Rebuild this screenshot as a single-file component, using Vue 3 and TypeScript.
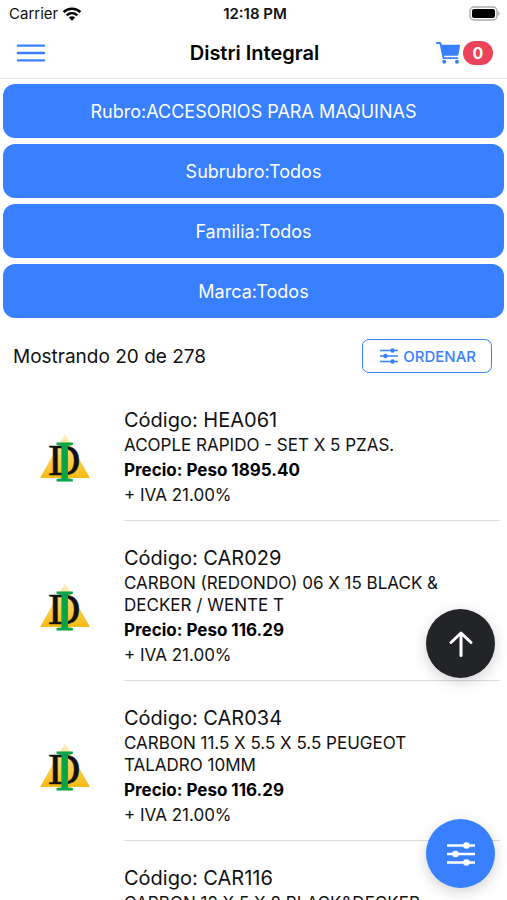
<script setup lang="ts">
import { ref } from 'vue'

interface Product {
  code: string
  description: string
  price: string
}

const filters = [
  { label: 'Rubro', value: 'ACCESORIOS PARA MAQUINAS' },
  { label: 'Subrubro', value: 'Todos' },
  { label: 'Familia', value: 'Todos' },
  { label: 'Marca', value: 'Todos' },
]

const products: Product[] = [
  { code: 'HEA061', description: 'ACOPLE RAPIDO - SET X 5 PZAS.', price: '1895.40' },
  { code: 'CAR029', description: 'CARBON (REDONDO) 06 X 15 BLACK & DECKER / WENTE T', price: '116.29' },
  { code: 'CAR034', description: 'CARBON 11.5 X 5.5 X 5.5 PEUGEOT TALADRO 10MM', price: '116.29' },
  { code: 'CAR116', description: 'CARBON 12 X 5 X 8 BLACK&DECKER TALADRO', price: '116.29' },
]

const cartCount = ref(0)
const list = ref<HTMLElement | null>(null)

function scrollToTop() {
  list.value?.scrollTo({ top: 0, behavior: 'smooth' })
}
</script>

<template>
  <div class="screen">
    <div class="status">
      <div class="carrier">
        <span>Carrier</span>
        <svg width="20" height="14" viewBox="0 0 20 14" aria-hidden="true">
          <g fill="none" stroke="#000" stroke-width="2.4">
            <path d="M1.6 5.2a12 12 0 0 1 16.8 0" />
            <path d="M4.7 8.3a7.6 7.6 0 0 1 10.6 0" />
          </g>
          <path d="M10 13.8 6.8 10.6a4.6 4.6 0 0 1 6.4 0z" />
        </svg>
      </div>
      <span class="clock">12:18 PM</span>
      <svg class="battery" width="32" height="15" viewBox="0 0 32 15" aria-hidden="true">
        <rect x="1" y="1" width="27" height="13" rx="4" fill="#fff" stroke="#aaa" stroke-width="1.4" />
        <rect x="3" y="3" width="23" height="9" rx="2" />
        <path d="M29.3 5.2c1.6.6 1.6 4 0 4.6z" fill="#999" />
      </svg>
    </div>

    <header class="toolbar">
      <button class="icon-button" type="button" aria-label="Menú">
        <svg width="30" height="20" viewBox="0 0 30 20">
          <path d="M2 2.600h26M2 10h26M2 17.400h26" stroke="#3880ff" stroke-width="2.400" stroke-linecap="round" />
        </svg>
      </button>
      <h1>Distri Integral</h1>
      <button class="icon-button cart" type="button" aria-label="Carrito">
        <svg width="26" height="24" viewBox="0 0 26 24">
          <path d="M1.900 2h3.400l3.300 15.200h13.900" fill="none" stroke="#3880ff" stroke-width="1.800" stroke-linecap="round" stroke-linejoin="round" />
          <path d="M5.500 3.700h18.800q.9 0 .7.900l-1.500 8.900q-.2 1.200-1.400 1.200H7.800z" fill="#3880ff" />
          <circle cx="9.200" cy="20.800" r="2" fill="#3880ff" />
          <circle cx="22" cy="20.800" r="2" fill="#3880ff" />
        </svg>
        <span class="badge">{{ cartCount }}</span>
      </button>
    </header>

    <main ref="list" class="content">
      <div class="filters">
        <button v-for="f in filters" :key="f.label" class="filter" type="button">{{ f.label }}:{{ f.value }}</button>
      </div>

      <div class="summary">
        <span>Mostrando 20 de 278</span>
        <button class="sort" type="button">
          <svg width="20" height="16" viewBox="0 0 20 16" aria-hidden="true">
            <path d="M1 2.500h18M1 8h18M1 13.500h18" stroke="#3880ff" stroke-width="1.500" />
            <g fill="#3880ff">
              <circle cx="13.500" cy="2.500" r="2.200" />
              <circle cx="6.500" cy="8" r="2.200" />
              <circle cx="13.500" cy="13.500" r="2.200" />
            </g>
          </svg>
          ORDENAR
        </button>
      </div>

      <ul class="products">
        <li v-for="p in products" :key="p.code" class="product">
          <svg class="logo" width="52" height="72" viewBox="0 -12 52 72" role="img" aria-label="Distri Integral">
            <defs>
              <linearGradient id="gold" x1="0" y1="0" x2="0" y2="1">
                <stop offset="0" stop-color="#fff3d0" />
                <stop offset=".35" stop-color="#fbd873" />
                <stop offset="1" stop-color="#f6bb12" />
              </linearGradient>
            </defs>
            <path d="M26-1 51 43H1z" fill="url(#gold)" />
            <text x="9" y="40" font-size="45" fill="#111" stroke="#111" stroke-width=".5">D</text>
            <text x="16" y="46" font-size="58" fill="#08a548" stroke="#08a548" stroke-width="1">I</text>
          </svg>
          <div class="details">
            <h2>Código: {{ p.code }}</h2>
            <p class="description">{{ p.description }}</p>
            <p class="price">Precio: Peso {{ p.price }}</p>
            <p class="tax">+ IVA 21.00%</p>
          </div>
        </li>
      </ul>
    </main>

    <div class="fabs">
      <button class="fab dark" type="button" aria-label="Volver arriba" @click="scrollToTop">
        <svg width="28" height="28" viewBox="0 0 28 28">
          <path d="M4 12.500 14 3l10 9.500M14 3.500v22" fill="none" stroke="#fff" stroke-width="3" stroke-linecap="round" stroke-linejoin="round" />
        </svg>
      </button>
      <button class="fab" type="button" aria-label="Filtrar">
        <svg width="28" height="24" viewBox="0 0 28 24">
          <path d="M0 3.500h28M0 12h28M0 20.500h28" stroke="#fff" stroke-width="2.400" />
          <g fill="#fff">
            <circle cx="19.500" cy="3.500" r="3.300" />
            <circle cx="8.500" cy="12" r="3.300" />
            <circle cx="19.500" cy="20.500" r="3.300" />
          </g>
        </svg>
      </button>
    </div>
  </div>
</template>

<style>
body {
  margin: 0;
  background: #fff;
}
</style>

<style scoped>
.screen {
  position: relative;
  display: flex;
  flex-direction: column;
  height: 100vh;
  overflow: hidden;
  color: #111;
  font-family: Inter, "Liberation Sans", sans-serif;
}

button {
  padding: 0;
  border: 0;
  background: none;
  font: inherit;
  cursor: pointer;
}

svg {
  display: block;
  flex: none;
}

h1,
h2,
p {
  margin: 0;
}

.status {
  display: grid;
  grid-template-columns: 1fr auto 1fr;
  align-items: center;
  height: 27px;
  padding: 0 6px 0 9px;
  font-size: 15px;
}

.carrier {
  display: flex;
  align-items: center;
  gap: 4px;
}

.clock {
  font-weight: 600;
}

.battery {
  justify-self: end;
}

.toolbar {
  display: grid;
  grid-template-columns: 1fr auto 1fr;
  align-items: center;
  height: 51px;
  padding: 0 14px 0 16px;
  border-bottom: 1px solid #e4e4e4;
}

.toolbar h1 {
  color: #000;
  font-size: 20px;
  font-weight: 600;
  line-height: 24px;
}

.icon-button {
  display: flex;
  align-items: center;
  justify-self: start;
}

.cart {
  justify-self: end;
  gap: 2px;
}

.badge {
  min-width: 30px;
  border-radius: 12px;
  background: #eb445a;
  color: #fff;
  font-size: 16px;
  font-weight: 700;
  line-height: 24px;
  text-align: center;
}

.content {
  flex: 1;
  min-height: 0;
  overflow-y: auto;
  scrollbar-width: none;
}

.filters {
  display: grid;
  gap: 6px;
  padding: 5px 3px 0;
}

.filter {
  height: 54px;
  border-radius: 12px;
  background: #3880ff;
  color: #fff;
  font-size: 18px;
}

.summary {
  display: flex;
  align-items: center;
  justify-content: space-between;
  padding: 21px 15px 10px 13px;
  font-size: 19px;
}

.sort {
  display: flex;
  align-items: center;
  gap: 4px;
  height: 34px;
  padding: 0 15px 0 16px;
  border: 1px solid #3880ff;
  border-radius: 7px;
  color: #3880ff;
  font-size: 15px;
  font-weight: 500;
}

.products {
  margin: 0;
  padding: 0;
  list-style: none;
}

.product {
  display: flex;
  align-items: center;
  gap: 33px;
  padding: 0 7px 0 39px;
}

.logo {
  margin-top: 14px;
  font-family: "Liberation Serif", serif;
}

.details {
  flex: 1;
  min-width: 0;
  padding: 24px 50px 12px 0;
  border-bottom: 1px solid #dcdcdc;
  font-size: 17px;
}

.details h2 {
  font-size: 20px;
  font-weight: 400;
  line-height: 26px;
}

.description {
  margin: 1px 0 2px;
  line-height: 22px;
}

.price {
  color: #000;
  font-weight: 700;
  line-height: 24px;
}

.tax {
  line-height: 26px;
}

.fabs {
  position: absolute;
  right: 12px;
  bottom: 12px;
  display: grid;
  gap: 141px;
}

.fab {
  display: grid;
  place-items: center;
  width: 69px;
  height: 69px;
  border-radius: 50%;
  background: #3880ff;
  box-shadow: 0 4px 14px rgba(0, 0, 0, 0.18);
}

.dark {
  background: #222428;
}
</style>
